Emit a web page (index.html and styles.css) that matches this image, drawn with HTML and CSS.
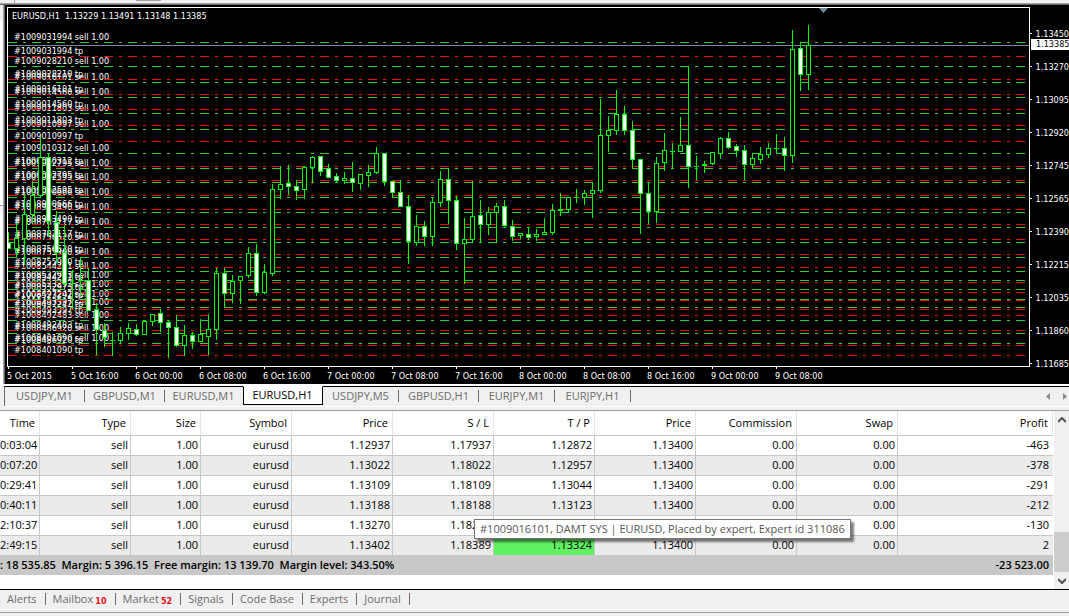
FILE: index.html
```html
<!DOCTYPE html>
<html lang="en">
<head>
<meta charset="utf-8">
<title>EURUSD,H1</title>
<link rel="stylesheet" href="styles.css">
</head>
<body>
<div class="strip"><span class="strip-mark"></span><span class="strip-box"></span></div>
<div class="workspace">
  <div class="gutter"></div>
  <main class="chart">
    <div class="plot">
      <svg class="canvas" id="canvas" role="img" aria-label="EURUSD hourly candles"></svg>
      <h1 class="chart-title">EURUSD,H1&nbsp; 1.13229 1.13491 1.13148 1.13385</h1>
    </div>
    <ol class="prices">
      <li>1.13450</li><li>1.13270</li><li>1.13095</li><li>1.12920</li><li>1.12745</li><li>1.12565</li>
      <li>1.12390</li><li>1.12215</li><li>1.12035</li><li>1.11860</li><li>1.11685</li>
    </ol>
    <span class="current">1.13385</span>
    <ol class="times">
      <li>5 Oct 2015</li><li>5 Oct 16:00</li><li>6 Oct 00:00</li><li>6 Oct 08:00</li><li>6 Oct 16:00</li><li>7 Oct 00:00</li><li>7 Oct 08:00</li>
      <li>7 Oct 16:00</li><li>8 Oct 00:00</li><li>8 Oct 08:00</li><li>8 Oct 16:00</li><li>9 Oct 00:00</li><li>9 Oct 08:00</li>
    </ol>
  </main>
</div>
<nav class="chart-tabs">
  <button class="tab">USDJPY,M1</button>
  <button class="tab">GBPUSD,M1</button>
  <button class="tab last">EURUSD,M1</button>
  <button class="tab active">EURUSD,H1</button>
  <button class="tab short">USDJPY,M5</button>
  <button class="tab">GBPUSD,H1</button>
  <button class="tab short">EURJPY,M1</button>
  <button class="tab short">EURJPY,H1</button>
  <span class="arrows">
    <button class="arrow" aria-label="Previous"><svg width="4" height="8"><path d="M4 0v7L0 3.500z" fill="#8a8a8a"/></svg></button>
    <button class="arrow" aria-label="Next"><svg width="4" height="8"><path d="M0 0v7L4 3.500z" fill="#8a8a8a"/></svg></button>
  </span>
</nav>
<section class="terminal">
  <div class="orders">
    <table>
      <colgroup><col class="c-time"><col class="c-type"><col class="c-size"><col class="c-type"><col class="c-num"><col class="c-num"><col class="c-num"><col class="c-num"><col class="c-num"><col class="c-num"><col></colgroup>
      <thead><tr><th>Time</th><th>Type</th><th>Size</th><th>Symbol</th><th>Price</th><th>S / L</th><th>T / P</th><th>Price</th><th>Commission</th><th>Swap</th><th>Profit</th></tr></thead>
      <tbody>
        <tr><td>0:03:04</td><td>sell</td><td>1.00</td><td>eurusd</td><td>1.12937</td><td>1.17937</td><td>1.12872</td><td>1.13400</td><td>0.00</td><td>0.00</td><td>-463</td></tr>
        <tr><td>0:07:20</td><td>sell</td><td>1.00</td><td>eurusd</td><td>1.13022</td><td>1.18022</td><td>1.12957</td><td>1.13400</td><td>0.00</td><td>0.00</td><td>-378</td></tr>
        <tr><td>0:29:41</td><td>sell</td><td>1.00</td><td>eurusd</td><td>1.13109</td><td>1.18109</td><td>1.13044</td><td>1.13400</td><td>0.00</td><td>0.00</td><td>-291</td></tr>
        <tr><td>0:40:11</td><td>sell</td><td>1.00</td><td>eurusd</td><td>1.13188</td><td>1.18188</td><td>1.13123</td><td>1.13400</td><td>0.00</td><td>0.00</td><td>-212</td></tr>
        <tr><td>2:10:37</td><td>sell</td><td>1.00</td><td>eurusd</td><td>1.13270</td><td>1.18270</td><td>1.13205</td><td>1.13400</td><td>0.00</td><td>0.00</td><td>-130</td></tr>
        <tr><td>2:49:15</td><td>sell</td><td>1.00</td><td>eurusd</td><td>1.13402</td><td>1.18389</td><td class="hit">1.13324</td><td>1.13400</td><td>0.00</td><td>0.00</td><td>2</td></tr>
      </tbody>
    </table>
    <p class="summary"><span>: 18 535.85&nbsp; Margin: 5 396.15&nbsp; Free margin: 13 139.70&nbsp; Margin level: 343.50%</span><span>-23 523.00</span></p>
  </div>
  <div class="scrollbar">
    <button class="scroll-btn" aria-label="Scroll up"><svg width="8" height="6"><path d="M0 5L4 1L8 5" fill="none" stroke="#505050" stroke-width="2"/></svg></button>
    <span class="thumb"></span>
    <button class="scroll-btn" aria-label="Scroll down"><svg width="8" height="6"><path d="M0 1L4 5L8 1" fill="none" stroke="#505050" stroke-width="2"/></svg></button>
  </div>
  <div class="tooltip" role="tooltip">#1009016101, DAMT SYS | EURUSD, Placed by expert, Expert id 311086</div>
</section>
<nav class="bottom-tabs">
  <button class="panel">Alerts</button>
  <button class="panel">Mailbox <b>10</b></button>
  <button class="panel">Market <b>52</b></button>
  <button class="panel">Signals</button>
  <button class="panel">Code Base</button>
  <button class="panel">Experts</button>
  <button class="panel">Journal</button>
</nav>
<footer class="status"></footer>
<script src="chart.js"></script>
</body>
</html>
```

FILE: styles.css
```css
* { box-sizing: border-box; }
body {
  margin: 0;
  background: #f0f0f0;
  color: #000;
  font: 11px/20px "Open Sans", "Noto Sans", sans-serif;
  overflow-x: hidden;
}
button { margin: 0; padding: 0; border: 0; background: none; font: inherit; color: inherit; }
ol { list-style: none; margin: 0; padding: 0; }

.strip {
  display: flex;
  height: 5px;
  border-bottom: 1px solid #696969;
  box-shadow: inset 0 -1px #a0a0a0;
}
.strip-mark { width: 15px; height: 3px; border-right: 1px solid #a0a0a0; }
.strip-box { width: 25px; height: 1px; margin-left: 121px; background: #a0a0a0; }

.workspace { display: flex; border-bottom: 2px solid #fff; }
.gutter {
  width: 5px;
  border-right: 1px solid #696969;
  background: linear-gradient(to right, transparent 3px, #a0a0a0 3px), linear-gradient(#f0f0f0 15px, #fff 15px, #fff 200px, #a0a0a0 200px, #a0a0a0 201px, #f0f0f0 201px, #fff 216px);
}

.chart {
  flex: 1;
  min-width: 0;
  display: grid;
  grid-template-columns: minmax(0, 1fr) 39px;
  grid-template-rows: auto 17px;
  padding: 2px 0 0 2px;
  background: #000;
  color: #fff;
  font: 9px/12px "DejaVu Sans Condensed", "Open Sans", sans-serif;
  position: relative;
}
.plot { position: relative; border: 1px solid #fff; }
.canvas { display: block; width: 100%; height: 358px; }
.chart-title { position: absolute; left: 4px; top: 2px; margin: 0; font: inherit; white-space: nowrap; }
.prices { grid-row: span 2; padding-top: 10px; height: 376px; }
.prices li { height: 33px; display: flex; align-items: center; gap: 4px; }
.prices li::before { content: ""; width: 2px; height: 1px; background: #fff; }
.times { display: flex; overflow: hidden; }
.times li { flex: none; width: 64px; white-space: nowrap; line-height: 14px; }
.times li::before { content: ""; display: block; width: 1px; height: 2px; margin-left: 1px; background: #fff; }
.current {
  position: absolute;
  right: 0;
  top: 34px;
  width: 38px;
  padding-left: 5px;
  background: #fff;
  color: #000;
  line-height: 11px;
}
.order-label { fill: #fff; }
.sell { stroke: #32cd32; stroke-dasharray: 9 6 3 6; }
.tp { stroke: #f00; stroke-dasharray: 9 6 3 6; }
.bid { stroke: #778899; }
.shift { fill: #778899; }
.wick { stroke: #0f0; }
.up { fill: #000; stroke: #0f0; }
.down { fill: #fff; stroke: #0f0; }

.chart-tabs {
  display: flex;
  height: 20px;
  margin-left: 4px;
  border-top: 1px solid #000;
  border-left: 1px solid #696969;
  color: #6d6d6d;
  box-shadow: 0 1px #fff;
}
.tab { width: 80px; height: 18px; line-height: 16px; padding-bottom: 1px; display: flex; align-items: center; justify-content: center; white-space: nowrap; }
.tab::after { content: ""; width: 1px; height: 12px; margin-left: auto; background: #6d6d6d; }
.tab::before { content: ""; margin-right: auto; }
.tab.short { width: 76px; }
.tab.last { width: 78px; }
.tab.last::after, .tab.active::after { background: none; }
.tab.active { height: 19px; margin-top: -1px; background: #fff; border: 1px solid #000; border-top-color: #fff; color: #000; }
.arrows { display: flex; gap: 13px; margin-left: auto; padding-right: 2px; align-items: center; }
.arrow { display: flex; }

.terminal {
  position: relative;
  display: flex;
  margin-top: 4px;
  border-top: 1px solid #a0a0a0;
  border-bottom: 1px solid #000;
  background: #fff;
}
.orders { flex: 1; min-width: 0; padding-bottom: 14px; }
table { width: 100%; table-layout: fixed; border-collapse: separate; border-spacing: 0; }
.c-time { width: 40px; }
.c-type { width: 91px; }
.c-size { width: 70px; }
.c-num { width: 101px; }
th { height: 25px; padding: 0 4px 0 0; text-align: right; font-weight: 400; line-height: 24px; border-right: 1px solid #e5e5e5; border-bottom: 1px solid #c8c8c8; }
td { height: 20px; padding: 0 2px 2px 0; text-align: right; line-height: 17px; white-space: nowrap; border-right: 1px solid #c8c8c8; border-bottom: 1px solid #c8c8c8; }
td:last-child { border-right: 0; padding-right: 4px; }
tbody tr:nth-child(even) { background: #ebebeb; }
.hit { background: #60f060 padding-box; }
.summary { display: flex; justify-content: space-between; height: 19px; margin: 0; padding-right: 4px; background: #c8c8c8; line-height: 18px; font-weight: 600; white-space: nowrap; }

.scrollbar { display: flex; flex-direction: column; width: 16px; border-left: 1px solid #fff; background: #f0f0f0; }
.scroll-btn { display: flex; align-items: center; justify-content: center; height: 17px; }
.thumb { height: 40px; margin-top: auto; background: #cdcdcd; }

.tooltip {
  position: absolute;
  left: 474px;
  top: 108px;
  padding: 0 5px;
  border: 1px solid #767676;
  background: #fff;
  color: #575757;
  line-height: 18px;
  white-space: nowrap;
  box-shadow: 3px 3px 2px rgba(0, 0, 0, 0.5);
}

.bottom-tabs { display: flex; align-items: center; height: 19px; color: #6d6d6d; }
.panel { display: flex; align-items: center; gap: 2px; padding-left: 7px; line-height: 16px; padding-bottom: 1px; white-space: nowrap; }
.panel::after { content: ""; width: 1px; height: 12px; margin-left: 6px; background: #6d6d6d; }
.panel b { color: #e81123; font: 700 9px/12px "DejaVu Sans Condensed", sans-serif; padding-top: 3px; }
.status { height: 7px; border-top: 1px solid #fff; box-shadow: inset 0 2px #f0f0f0, inset 0 3px #a0a0a0; }
```

FILE: chart.js
```js
// Order levels: ticket, sell line, take-profit line.
const orders = [
  ["1009031994", 42, 56], ["1009028210", 66, 79], ["1009016101", 82, 94], ["1009014560", 97, 109],
  ["1009011803", 113, 125], ["1009010997", 129, 141], ["1009010312", 153, 166], ["1009002795", 168, 180],
  ["1009002595", 182, 195], ["1008990666", 197, 209], ["1008983490", 212, 224], ["1008787117", 227, 239],
  ["1008756520", 242, 254], ["1008755900", 257, 267], ["1008544231", 271, 282], ["1008532973", 280, 292],
  ["1008523292", 289, 300], ["1008497242", 299, 309], ["1008493397", 307, 315], ["1008492483", 320, 330],
  ["1008486920", 333, 345], ["1008401090", 343, 355]
];

// Candles, one per hour: high, body top, body bottom, low, direction.
const candles = [
  [232,242,249,249,"d"],[223,238,249,257,"u"],[193,214,239,265,"u"],[181,195,215,223,"u"],[137,157,196,198,"u"],
  [153,157,222,237,"d"],[211,222,253,263,"d"],[225,252,284,286,"d"],[270,283,284,309,"u"],[257,280,281,296,"u"],
  [268,280,311,311,"d"],[303,309,330,355,"d"],[323,330,338,347,"d"],[332,340,341,356,"u"],[327,333,341,343,"u"],
  [323,328,334,340,"u"],[324,329,335,336,"d"],[320,321,335,335,"u"],[314,314,322,326,"u"],[309,313,323,332,"d"],
  [320,322,328,358,"d"],[315,327,346,347,"d"],[325,335,346,356,"u"],[332,335,342,349,"d"],[319,334,342,342,"u"],
  [314,329,337,355,"u"],[268,273,330,340,"u"],[268,273,294,307,"d"],[275,281,294,303,"u"],[276,276,281,304,"u"],
  [247,253,276,278,"u"],[244,253,293,296,"d"],[264,272,293,294,"u"],[184,189,274,276,"u"],[166,184,190,199,"u"],
  [165,183,187,195,"d"],[180,186,191,200,"d"],[166,167,190,199,"u"],[156,157,168,183,"u"],[156,156,172,176,"d"],
  [164,168,178,178,"d"],[173,176,181,183,"d"],[172,178,181,184,"u"],[162,178,183,192,"d"],[174,174,184,190,"u"],
  [165,172,176,187,"u"],[147,153,173,174,"u"],[153,153,182,186,"d"],[181,181,193,198,"d"],[180,192,207,207,"d"],
  [195,206,242,264,"d"],[215,226,243,246,"u"],[221,226,237,246,"d"],[198,202,237,246,"u"],[171,179,203,207,"u"],
  [168,179,201,224,"d"],[196,200,244,250,"d"],[218,239,244,284,"u"],[181,216,240,243,"u"],[200,215,225,243,"d"],
  [207,212,225,235,"u"],[203,206,213,243,"u"],[200,206,226,227,"d"],[220,226,237,241,"d"],[233,233,236,239,"u"],
  [227,234,238,240,"d"],[229,234,237,241,"u"],[218,232,235,235,"u"],[204,210,233,235,"u"],[193,209,211,216,"u"],
  [197,197,210,213,"u"],[189,197,198,203,"u"],[190,193,198,205,"u"],[182,190,194,218,"u"],[99,135,191,193,"u"],
  [116,130,136,152,"u"],[90,114,131,135,"u"],[106,114,131,135,"d"],[121,130,160,168,"d"],[159,159,194,234,"d"],
  [182,193,212,224,"d"],[157,163,212,223,"u"],[133,150,163,171,"u"],[143,151,152,168,"u"],[117,145,152,152,"u"],
  [66,145,167,188,"d"],[156,166,167,180,"u"],[161,164,166,173,"u"],[152,152,164,165,"u"],[137,138,154,159,"u"],
  [132,138,148,149,"d"],[144,146,151,157,"d"],[145,150,165,180,"d"],[153,158,165,169,"u"],[147,154,160,164,"u"],
  [143,148,155,158,"u"],[134,148,149,153,"u"],[137,148,156,171,"d"],[30,49,156,163,"u"],[42,48,75,91,"d"],
  [25,45,75,90,"u"]
];

const TOP = 8;
const canvas = document.getElementById("canvas");

function add(name, attrs, text) {
  const node = document.createElementNS("http://www.w3.org/2000/svg", name);
  for (const key in attrs) node.setAttribute(key, attrs[key]);
  if (text) node.textContent = text;
  canvas.appendChild(node);
}

function level(y, cls) {
  add("line", { x1: 0, x2: "100%", y1: y - TOP + 0.5, y2: y - TOP + 0.5, class: cls });
}

for (const [ticket, sell, tp] of orders) {
  add("text", { x: 6, y: sell - TOP - 2, class: "order-label" }, "#" + ticket + " sell 1.00");
  add("text", { x: 6, y: tp - TOP - 2, class: "order-label" }, "#" + ticket + " tp");
}
for (const [, sell, tp] of orders) {
  level(tp, "tp");
  level(sell, "sell");
}
level(45, "bid");

candles.forEach(([high, top, bottom, low, dir], i) => {
  const x = i * 8 + 0.5;
  add("line", { x1: x, x2: x, y1: high - TOP, y2: low - TOP, class: "wick" });
  if (bottom - top < 2) {
    add("line", { x1: x - 2.5, x2: x + 2.5, y1: top - TOP + 0.5, y2: top - TOP + 0.5, class: "wick" });
  } else {
    add("rect", { x: x - 2, y: top - TOP + 0.5, width: 4, height: bottom - top - 1, class: dir === "u" ? "up" : "down" });
  }
});

add("path", { d: "M811 0h9l-4.500 5z", class: "shift" });
```
